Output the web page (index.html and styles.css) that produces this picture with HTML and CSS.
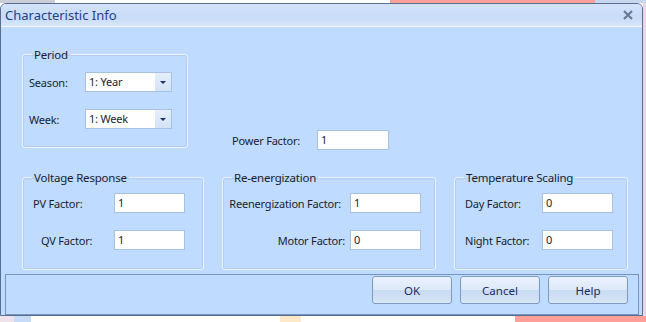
FILE: index.html
```html
<!DOCTYPE html>
<html lang="en">

<head>
    <meta charset="UTF-8">
    <meta name="viewport" content="width=device-width, initial-scale=1.0">
    <title>Characteristic Info</title>
    <link rel="stylesheet" href="styles.css">
</head>

<body>
    <div class="backdrop-top">
        <span class="seg seg-grey"></span>
        <span class="seg seg-white"></span>
        <span class="seg seg-pink"></span>
        <span class="seg seg-blue"></span>
    </div>

    <div class="screen">
        <div class="dialog">
            <div class="titlebar">
                <span class="title">Characteristic Info</span>
                <svg class="close" width="10" height="10" viewBox="0 0 10 10">
                    <path d="M1 1 L9 9 M9 1 L1 9" stroke="#68778f" stroke-width="2" />
                </svg>
            </div>

            <div class="dialog-body">
                <div class="top-row">
                    <fieldset class="group group-period">
                        <legend>Period</legend>
                        <div class="row">
                            <label class="lbl lbl-period">Season:</label>
                            <div class="combo">
                                <span class="combo-text">1: Year</span>
                                <span class="combo-btn"><span class="arrow"></span></span>
                            </div>
                        </div>
                        <div class="row row-second">
                            <label class="lbl lbl-period">Week:</label>
                            <div class="combo">
                                <span class="combo-text">1: Week</span>
                                <span class="combo-btn"><span class="arrow"></span></span>
                            </div>
                        </div>
                    </fieldset>

                    <div class="power-row">
                        <label class="lbl lbl-power">Power Factor:</label>
                        <input class="field field-power" type="text" value="1">
                    </div>
                </div>

                <div class="groups-row">
                    <fieldset class="group group-voltage">
                        <legend>Voltage Response</legend>
                        <div class="row">
                            <label class="lbl lbl-voltage">PV Factor:</label>
                            <input class="field" type="text" value="1">
                        </div>
                        <div class="row row-second">
                            <label class="lbl lbl-voltage lbl-indent">QV Factor:</label>
                            <input class="field" type="text" value="1">
                        </div>
                    </fieldset>

                    <fieldset class="group group-reenergize">
                        <legend>Re-energization</legend>
                        <div class="row">
                            <label class="lbl lbl-reenergize lbl-wide">Reenergization Factor:</label>
                            <input class="field" type="text" value="1">
                        </div>
                        <div class="row row-second">
                            <label class="lbl lbl-reenergize">Motor Factor:</label>
                            <input class="field" type="text" value="0">
                        </div>
                    </fieldset>

                    <fieldset class="group group-temperature">
                        <legend>Temperature Scaling</legend>
                        <div class="row">
                            <label class="lbl lbl-temperature">Day Factor:</label>
                            <input class="field" type="text" value="0">
                        </div>
                        <div class="row row-second">
                            <label class="lbl lbl-temperature">Night Factor:</label>
                            <input class="field" type="text" value="0">
                        </div>
                    </fieldset>
                </div>

                <div class="button-panel">
                    <button class="btn">OK</button>
                    <button class="btn">Cancel</button>
                    <button class="btn">Help</button>
                </div>
            </div>
        </div>
        <div class="backdrop-side"></div>
    </div>

    <div class="backdrop-bottom">
        <span class="seg seg-lilac"></span>
        <span class="seg seg-lightblue"></span>
        <span class="seg seg-white-wide"></span>
        <span class="seg seg-orange"></span>
        <span class="seg seg-white"></span>
        <span class="seg seg-pink"></span>
    </div>
</body>

</html>
```

FILE: styles.css
```css
body {
    margin: 0;
    padding: 0;
    background-color: #ffffff;
    font-family: "Noto Sans", "Open Sans", sans-serif;
    font-size: 11px;
    letter-spacing: -0.2px;
    color: #1b1d2e;
    width: 646px;
    height: 322px;
    overflow: hidden;
}

/* app content peeking out behind the dialog */
.backdrop-top,
.backdrop-bottom {
    display: flex;
    height: 3px;
}

.backdrop-bottom {
    height: 6px;
}

.seg {
    display: block;
    height: 100%;
}

.seg-grey {
    width: 55px;
    background-color: #c9cfd8;
}

.seg-white {
    width: 335px;
    background-color: #ffffff;
}

.seg-pink {
    width: 205px;
    background-color: #ff9f9a;
}

.seg-blue {
    flex: 1;
    background-color: #c6d8f0;
}

.seg-lilac {
    width: 22px;
    background-color: #efe2ea;
}

.seg-lightblue {
    width: 26px;
    background-color: #c6dbf6;
}

.seg-white-wide {
    width: 390px;
    background-color: #ffffff;
}

.seg-orange {
    width: 32px;
    background-color: #fde9c8;
}

.screen {
    display: flex;
}

.backdrop-side {
    width: 3px;
    background-color: #ead6e6;
}

/* dialog window */
.dialog {
    box-sizing: border-box;
    width: 643px;
    height: 313px;
    border: 1px solid #5a6e93;
    border-radius: 6px 6px 0 0;
    background-color: #bfdbff;
    display: flex;
    flex-direction: column;
}

.titlebar {
    height: 23px;
    display: flex;
    align-items: center;
    justify-content: space-between;
    padding: 0 9px 0 4px;
    border-bottom: 1px solid #f4f8ff;
    border-radius: 5px 5px 0 0;
    background: linear-gradient(#d3e3fa, #c7dcf8 60%, #d6e6fb);
}

.title {
    font-size: 13px;
    letter-spacing: 0;
    color: #1f3f8f;
}

.dialog-body {
    flex: 1;
    padding: 20px 0 0 21px;
    display: flex;
    flex-direction: column;
}

/* group boxes */
.group {
    box-sizing: border-box;
    margin: 0;
    padding: 8px 0 0 0;
    border: 1px solid #eef4fd;
    border-radius: 3px;
    box-shadow: inset 0 0 0 1px #b3cdf0;
    min-width: 0;
}

.group legend {
    margin-left: 9px;
    padding: 0 2px;
    color: #1b1d2e;
    line-height: 15px;
    font-size: 11.5px;
}

.row {
    display: flex;
    align-items: center;
    height: 20px;
}

.row-second {
    margin-top: 17px;
}

.lbl {
    box-sizing: border-box;
    flex-shrink: 0;
}

.top-row {
    display: flex;
}

.group-period {
    width: 166px;
    height: 101px;
    padding-top: 10px;
}

.lbl-period {
    width: 62px;
    padding-left: 6px;
}

.combo {
    box-sizing: border-box;
    width: 87px;
    height: 20px;
    display: flex;
    background-color: #ffffff;
    border: 1px solid #a8c1e3;
}

.combo-text {
    flex: 1;
    padding-left: 3px;
    line-height: 18px;
}

.combo-btn {
    width: 16px;
    display: flex;
    align-items: center;
    justify-content: center;
    background: linear-gradient(#e6effb, #d2e2f6);
}

.arrow {
    width: 0;
    height: 0;
    border-left: 3px solid transparent;
    border-right: 3px solid transparent;
    border-top: 3px solid #15306a;
}

.power-row {
    display: flex;
    align-items: center;
    margin: 83px 0 0 44px;
    height: 20px;
}

.lbl-power {
    width: 85px;
}

.field {
    box-sizing: border-box;
    width: 71px;
    height: 20px;
    margin: 0;
    padding: 0 0 2px 3px;
    border: 1px solid #a8c1e3;
    background-color: #ffffff;
    font-family: inherit;
    font-size: 11px;
    color: #1b1d2e;
    outline: none;
}

.field-power {
    width: 72px;
}

.groups-row {
    display: flex;
    gap: 18px;
    margin-top: 20px;
}

.group-voltage {
    width: 182px;
    height: 100px;
}

.lbl-voltage {
    width: 91px;
    padding-left: 10px;
}

.lbl-indent {
    padding-left: 18px;
}

.group-reenergize {
    width: 214px;
    height: 100px;
}

.lbl-reenergize {
    width: 127px;
    padding-right: 5px;
    text-align: right;
}

.lbl-wide {
    padding-right: 9px;
}

.group-temperature {
    width: 174px;
    height: 100px;
}

.lbl-temperature {
    width: 87px;
    padding-left: 10px;
}

/* bottom button strip */
.button-panel {
    box-sizing: border-box;
    width: 634px;
    height: 41px;
    margin: 4px 0 0 -17px;
    padding: 1px 10px 0 0;
    border: 1px solid #7594c4;
    display: flex;
    justify-content: flex-end;
    align-items: flex-start;
    gap: 8px;
}

.btn {
    width: 80px;
    height: 28px;
    border: 1px solid #7f9bc4;
    border-radius: 3px;
    background: linear-gradient(#eaf2fd, #dde9f8 50%, #c9dbf2 51%, #d6e5f7);
    font-family: inherit;
    font-size: 11.5px;
    color: #1c2c5e;
}
```
